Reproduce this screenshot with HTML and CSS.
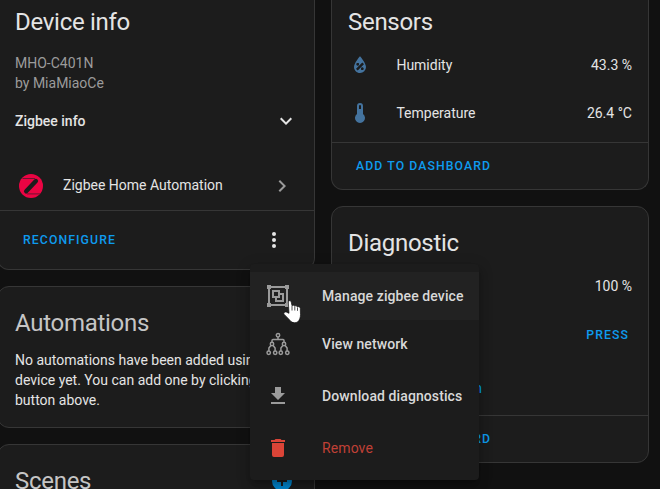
FILE: index.html
```html
<!DOCTYPE html>
<html lang="en">
<head>
<meta charset="utf-8">
<title>Device</title>
<link rel="stylesheet" href="styles.css">
</head>
<body>
<main class="columns">
  <div class="column">
    <section class="card device">
      <h1>Device info</h1>
      <div class="model">MHO-C401N<br>by MiaMiaoCe</div>
      <div class="expander"><span>Zigbee info</span><svg class="icon" viewBox="0 0 24 24"><path d="M7.41 8.58L12 13.17L16.59 8.58L18 10L12 16L6 10Z"/></svg></div>
      <div class="integration">
        <svg class="icon brand" viewBox="0 0 24 24"><circle cx="12" cy="12" r="12" fill="#eb0443"/><path d="M3.500 4.500H16M8 19.900H21" fill="none" stroke="#6e1430" stroke-width="1"/><path d="M16.900 7L7.200 17.300" stroke="#1c1c1c" stroke-width="4.400" stroke-linecap="round"/></svg>
        <span>Zigbee Home Automation</span>
        <svg class="icon next" viewBox="0 0 24 24"><path d="M8.59 16.58L13.17 12L8.59 7.41L10 6L16 12L10 18Z"/></svg>
      </div>
      <div class="actions"><span class="button">Reconfigure</span><svg class="icon" viewBox="0 0 24 24"><circle cx="12" cy="6" r="2"/><circle cx="12" cy="12" r="2"/><circle cx="12" cy="18" r="2"/></svg></div>
    </section>
    <section class="card automations">
      <h1>Automations</h1>
      <p>No automations have been added using this device yet. You can add one by clicking the + button above.</p>
    </section>
    <section class="card scenes">
      <h1>Scenes</h1>
      <svg class="icon add" viewBox="0 0 24 24"><path fill-rule="evenodd" d="M17 13H13V17H11V13H7V11H11V7H13V11H17ZM12 2A10 10 0 1 0 12 22A10 10 0 1 0 12 2Z"/></svg>
    </section>
  </div>
  <div class="column">
    <section class="card sensors">
      <h1>Sensors</h1>
      <div class="row">
        <svg class="icon sensor" viewBox="0 0 24 24"><path fill-rule="evenodd" d="M12 3.25C12 3.25 6 10 6 14C6 17.32 8.69 20 12 20A6 6 0 0 0 18 14C18 10 12 3.25 12 3.25ZM14.47 9.97L15.53 11.03L9.53 17.03L8.47 15.97ZM9.75 10A1.25 1.25 0 0 1 9.75 12.5A1.25 1.25 0 0 1 9.75 10ZM14.25 14.5A1.25 1.25 0 0 1 14.25 17A1.25 1.25 0 0 1 14.25 14.5Z"/><path fill="#1c1c1c" d="M14.3 9.600L15.900 11.200L9.700 17.400L8.100 15.800ZM8.500 11.250A1.250 1.250 0 0 0 11 11.250A1.250 1.250 0 0 0 8.500 11.250ZM13 15.750A1.250 1.250 0 0 0 15.500 15.750A1.250 1.250 0 0 0 13 15.750Z"/></svg>
        <span>Humidity</span><span class="value">43.3 %</span>
      </div>
      <div class="row">
        <svg class="icon sensor" viewBox="0 0 24 24"><path fill-rule="evenodd" d="M15 13V5A3 3 0 0 0 9 5V13A5 5 0 1 0 15 13ZM12 4A1 1 0 0 1 13 5V8H11V5A1 1 0 0 1 12 4Z"/></svg>
        <span>Temperature</span><span class="value">26.4 °C</span>
      </div>
      <div class="actions"><span class="button">Add to dashboard</span></div>
    </section>
    <section class="card diagnostic">
      <h1>Diagnostic</h1>
      <div class="row"><span class="value">100 %</span></div>
      <div class="row"><span class="value button">Press</span></div>
      <div class="hidden-entities">+2 entities not shown</div>
      <div class="actions"><span class="button">Add to dashboard</span></div>
    </section>
  </div>
</main>
<div class="menu">
  <div class="item active"><svg class="icon" viewBox="0 0 24 24"><path fill-rule="evenodd" d="M1 1V5H2V19H1V23H5V22H19V23H23V19H22V5H23V1H19V2H5V1ZM5 4H19V5H20V19H19V20H5V19H4V5H5ZM6 6V14H9V18H18V9H14V6ZM8 8H12V12H8ZM14 11H16V16H11V14H14Z"/></svg><span>Manage zigbee device</span></div>
  <div class="item"><svg class="icon tree" viewBox="0 0 24 24"><circle cx="12" cy="3.300" r="1.700"/><circle cx="6" cy="12" r="1.700"/><circle cx="18" cy="12" r="1.700"/><circle cx="2.700" cy="20.700" r="1.700"/><circle cx="9.200" cy="20.700" r="1.700"/><circle cx="14.800" cy="20.700" r="1.700"/><circle cx="21.300" cy="20.700" r="1.700"/><path d="M12 5V7.500M6 10.300V8.500Q6 7.500 7 7.500H17Q18 7.500 18 8.500V10.300M5 13.300L2.900 16V19M7 13.300L9.100 16V19M17 13.300L14.900 16V19M19 13.300L21.100 16V19"/></svg><span>View network</span></div>
  <div class="item spaced"><svg class="icon" viewBox="0 0 24 24"><path d="M5 20H19V18H5ZM19 9H15V3H9V9H5L12 16Z"/></svg><span>Download diagnostics</span></div>
  <div class="item spaced remove"><svg class="icon" viewBox="0 0 24 24"><path d="M19 4H15.500L14.500 3H9.500L8.500 4H5V6H19ZM6 19A2 2 0 0 0 8 21H16A2 2 0 0 0 18 19V7H6Z"/></svg><span>Remove</span></div>
</div>
<svg class="cursor" viewBox="0 0 19 25"><path d="M5.300 2.800C5.300 1.300 8 1.300 8.200 2.800L9 6.800C9.600 5.900 11.400 6 11.700 7.200C12.400 6.400 14 6.700 14.300 7.900C15.200 7.300 17.200 7.700 17.300 9.300L17.500 15.500C17.500 18.500 16.500 21.500 14.500 23C13 24 9.500 24 8 22.500C6 20 3.500 18 1 15.200C0 13.700 2.200 12.300 3.700 13.200L6 14.300Z"/><path class="creases" d="M9 7V11.500M11.800 7.500V11.500M14.500 8.500V11.800"/></svg>
</body>
</html>
```
FILE: styles.css
```css
* { box-sizing: border-box; }
body { margin: 0; width: 660px; height: 489px; overflow: hidden; background: #111; color: #e4e4e4; font: 14px/20px Roboto, sans-serif; }
.columns { display: flex; gap: 16px; margin-left: -3px; height: 489px; overflow: hidden; }
.column { width: 318px; flex: none; display: flex; flex-direction: column; gap: 16px; }
.card { background: #1c1c1c; border: 1px solid #363636; border-radius: 12px; flex: none; overflow: hidden; }
h1 { margin: 0; font-size: 24px; font-weight: 400; letter-spacing: -0.288px; line-height: 48px; }
.icon { width: 24px; height: 24px; flex: none; fill: currentColor; display: block; }
.device, .sensors { border-top: 0; border-radius: 0 0 12px 12px; }
.device { height: 270px; padding: 0 0 0 17px; display: flex; flex-direction: column; }
.device h1, .sensors h1 { height: 46px; margin-top: -2px; }
.model { color: #9b9b9b; margin-top: 9px; }
.expander { display: flex; justify-content: space-between; align-items: center; height: 24px; margin: 16px 16px 0 0; font-weight: 500; }
.integration { display: flex; align-items: center; height: 48px; margin-top: 28px; padding: 0 20px 0 4px; }
.integration span { margin-left: 20px; }
.brand { margin-top: 1px; }
.next { margin: 1px 0 0 auto; color: #9b9b9b; }
.actions { border-top: 1px solid #363636; display: flex; align-items: center; justify-content: space-between; height: 47px; padding: 0 24px; }
.device .actions { flex: 1; margin: 1px 0 0 -17px; padding: 0 28px 0 25px; }
.button { color: #0e9bee; font-size: 12.250px; font-weight: 500; letter-spacing: 1.090px; text-transform: uppercase; }
.automations { height: 142px; padding: 12px 16px 0 17px; }
.automations h1, .scenes h1 { color: #c5c5c5; }
.automations p { margin: 3px 0 0; }
.scenes { height: 100px; padding: 12px 20px 0 17px; display: flex; justify-content: space-between; }
.add { color: #0288d1; margin-top: 12px; }
.sensors { height: 190px; padding-top: 0; }
.sensors h1, .diagnostic h1 { padding-left: 16px; }
.row { display: flex; align-items: center; height: 48px; padding: 0 16px; }
.sensor { color: #44739e; }
.row .sensor { margin-right: 24.400px; }
.value { margin-left: auto; }
.sensors .row:first-of-type { margin-top: -3px; }
.sensors .actions { margin-top: 5px; }
.diagnostic { height: 257px; padding-top: 12px; }
.diagnostic h1 { height: 43px; }
.diagnostic .value.button { margin: 2px 3px 0 auto; }
.hidden-entities { color: #039be5; height: 57px; padding: 20px 166px 0 0; text-align: right; white-space: nowrap; }
.menu { position: absolute; left: 250px; top: 264px; width: 229px; height: 216px; padding: 8px 0; background: #1c1c1c; border-radius: 4px; box-shadow: 0 5px 5px -3px rgba(0,0,0,.2), 0 8px 10px 1px rgba(0,0,0,.14), 0 3px 14px 2px rgba(0,0,0,.12); }
.item { height: 48px; display: flex; align-items: center; gap: 32px; padding-left: 16px; font-weight: 500; letter-spacing: .1px; color: #d8d8d8; white-space: nowrap; }
.item .icon { color: #9b9b9b; }
.active { background: #222; }
.spaced { margin-top: 4px; }
.item.remove .icon { color: #db4437; }
.remove { font-weight: 400; }
.remove span { color: #c04036; }
.item .tree { fill: none; stroke: currentColor; stroke-width: 1.500; }
.cursor { position: absolute; left: 283px; top: 299px; width: 19px; height: 25px; fill: #fff; stroke: #111; stroke-width: .7; }
.creases { fill: none; stroke: #222; stroke-width: .8; }
```
